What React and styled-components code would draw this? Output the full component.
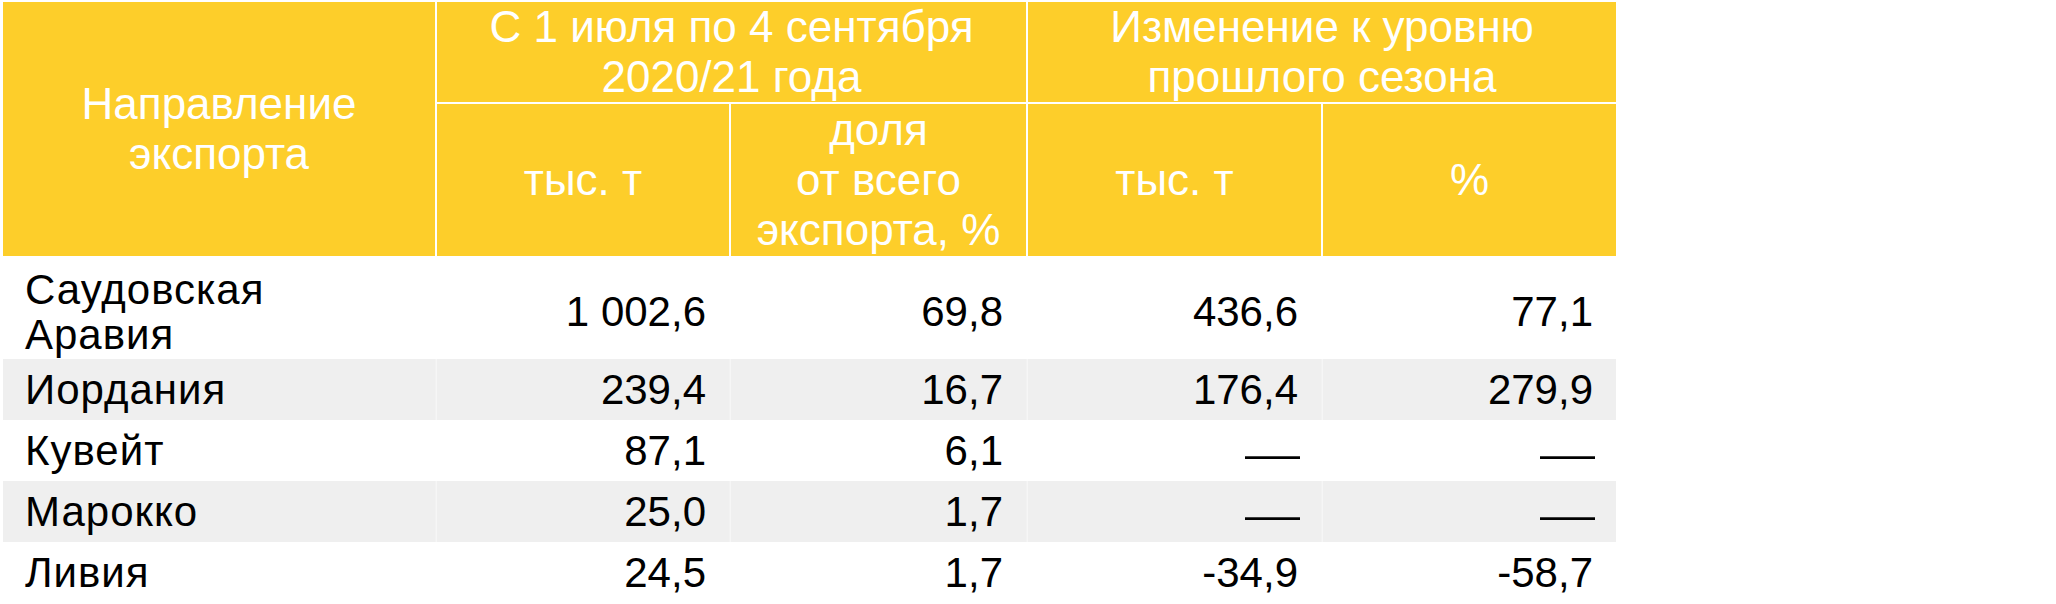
import React from "react";
import styled, { createGlobalStyle } from "styled-components";

const GlobalStyle = createGlobalStyle`
  html, body {
    margin: 0;
    padding: 0;
    background: #ffffff;
  }
  body {
    font-family: "Liberation Sans", Arial, sans-serif;
    color: #000000;
  }
`;

const COLS = "432px 292px 295px 293px 293px";
const YELLOW = "#FDCE2A";
const GRAY = "#EFEFEF";

const Table = styled.div`
  margin: 2px 0 0 3px;
  width: 1613px;
`;

const Head = styled.div`
  display: grid;
  grid-template-columns: ${COLS};
  grid-template-rows: 100px 152px;
  gap: 2px;
`;

const HeadCell = styled.div`
  grid-column: ${(p) => p.$col || "auto"};
  grid-row: ${(p) => p.$row || "auto"};
  background: ${YELLOW};
  color: #ffffff;
  display: flex;
  align-items: center;
  justify-content: center;
  text-align: center;
  font-size: 44px;
  line-height: 50px;
`;

const BodyRow = styled.div`
  display: grid;
  grid-template-columns: ${COLS};
  column-gap: 2px;
  height: ${(p) => (p.$tall ? 103 : 61)}px;
  box-sizing: border-box;
  padding-top: ${(p) => (p.$tall ? 8 : 0)}px;
  background: ${(p) => (p.$shade ? GRAY : "transparent")};
`;

const Cell = styled.div`
  display: flex;
  align-items: center;
  font-size: 42px;
  line-height: 45px;
  white-space: nowrap;
  box-shadow: ${(p) => (p.$shade ? "-1.5px 0 0 #F6F6F6" : "none")};
`;

const NameCell = styled(Cell)`
  padding-left: 22px;
  letter-spacing: 1px;
  box-shadow: none;
`;

const NumCell = styled(Cell)`
  justify-content: flex-end;
  padding-right: 23px;
`;

const Dash = styled.span`
  display: inline-block;
  transform-origin: right center;
  transform: translate(2px, 3px) scaleX(1.31);
`;

const rows = [
  { name: ["Саудовская", "Аравия"], vals: ["1\u00a0002,6", "69,8", "436,6", "77,1"] },
  { name: ["Иордания"], vals: ["239,4", "16,7", "176,4", "279,9"] },
  { name: ["Кувейт"], vals: ["87,1", "6,1", null, null] },
  { name: ["Марокко"], vals: ["25,0", "1,7", null, null] },
  { name: ["Ливия"], vals: ["24,5", "1,7", "-34,9", "-58,7"] },
];

export default function App() {
  return (
    <>
      <GlobalStyle />
      <Table>
        <Head>
          <HeadCell $col="1" $row="1 / span 2">
            Направление
            <br />
            экспорта
          </HeadCell>
          <HeadCell $col="2 / span 2" $row="1">
            С 1 июля по 4 сентября
            <br />
            2020/21 года
          </HeadCell>
          <HeadCell $col="4 / span 2" $row="1">
            Изменение к уровню
            <br />
            прошлого сезона
          </HeadCell>
          <HeadCell $col="2" $row="2">тыс. т</HeadCell>
          <HeadCell $col="3" $row="2">
            доля
            <br />
            от всего
            <br />
            экспорта, %
          </HeadCell>
          <HeadCell $col="4" $row="2">тыс. т</HeadCell>
          <HeadCell $col="5" $row="2">%</HeadCell>
        </Head>
        {rows.map((r, i) => {
          const shade = i % 2 === 1;
          return (
            <BodyRow key={i} $tall={r.name.length > 1} $shade={shade}>
              <NameCell>
                <div>
                  {r.name.map((n, j) => (
                    <div key={j}>{n}</div>
                  ))}
                </div>
              </NameCell>
              {r.vals.map((v, j) => (
                <NumCell key={j} $shade={shade}>
                  {v === null ? <Dash>—</Dash> : v}
                </NumCell>
              ))}
            </BodyRow>
          );
        })}
      </Table>
    </>
  );
}
